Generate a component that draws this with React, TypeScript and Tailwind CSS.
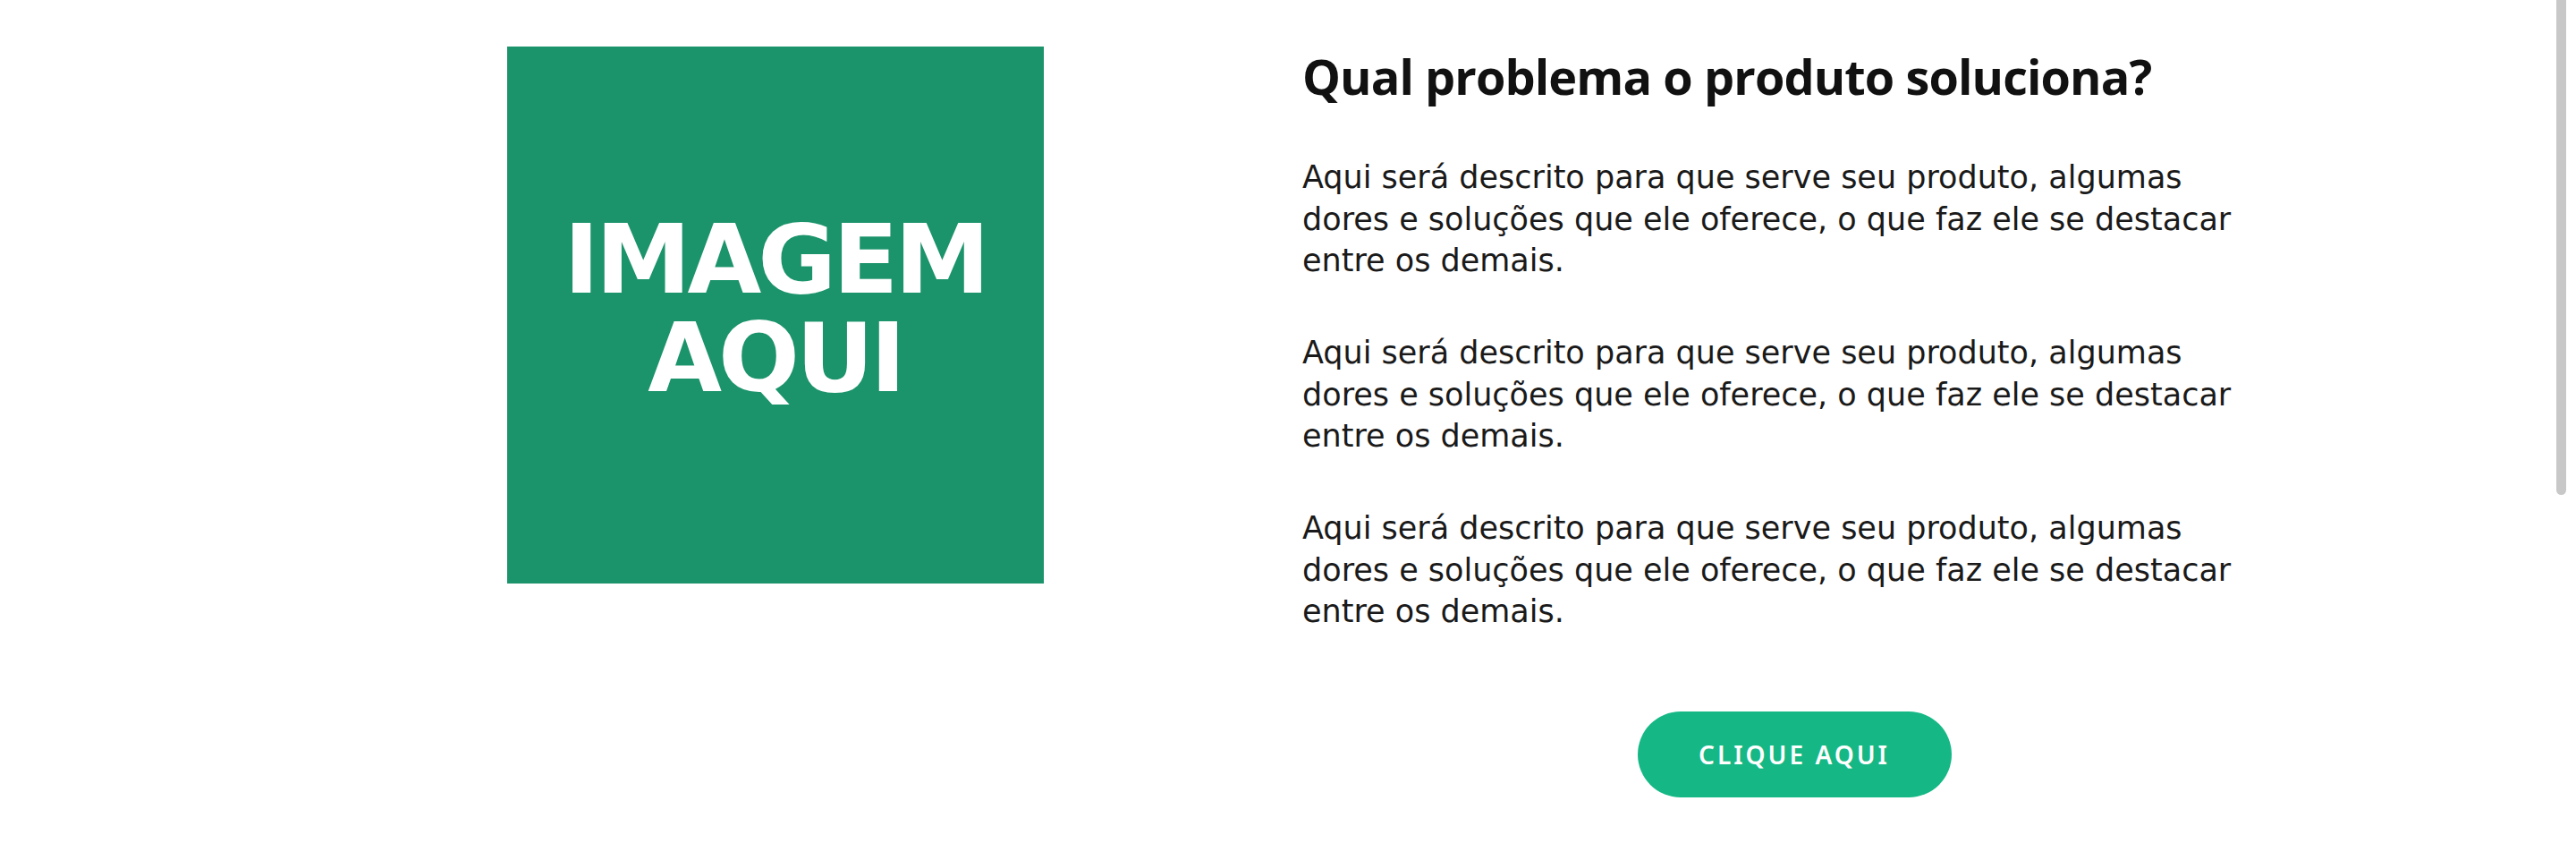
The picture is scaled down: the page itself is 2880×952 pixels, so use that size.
export default function App() {
  const paragraphs = [0, 1, 2]

  return (
    <div className="bg-white flex justify-center pr-[8px]">
      <section className="w-[2278px] flex items-start">
        <div className="w-1/2 flex justify-center pt-[52px]">
          <div className="w-[600px] h-[600px] bg-[#1b936b] flex flex-col items-center justify-center pb-[14px] text-white text-[107px] leading-[110px] font-bold tracking-[-4px] font-['DejaVu_Sans',sans-serif]">
            <span>IMAGEM</span>
            <span>AQUI</span>
          </div>
        </div>

        <div className="w-1/2 pl-[20px] pr-[19px] pt-[53px] pb-[60px] flex flex-col">
          <h2 className="font-['Open_Sans',sans-serif] font-bold text-[54px] leading-[1.2] tracking-[-0.9px] text-[#111111] mb-[57px]">
            Qual problema o produto soluciona?
          </h2>

          {paragraphs.map((i) => (
            <p
              key={i}
              className="font-['DejaVu_Sans',sans-serif] text-[35px] leading-[46.7px] text-[#1a1a1a] mb-[56px]"
            >
              Aqui será descrito para que serve seu produto, algumas
              <br />
              dores e soluções que ele oferece, o que faz ele se destacar
              <br />
              entre os demais.
            </p>
          ))}

          <div className="flex justify-center mt-[32px]">
            <button className="w-[351px] h-[96px] rounded-full bg-[#15b885] text-white text-[28px] font-semibold tracking-[3px] font-['Noto_Sans',sans-serif]">
              CLIQUE AQUI
            </button>
          </div>
        </div>
      </section>

      {/* scrollbar thumb as seen in the screenshot */}
      <div className="fixed top-0 right-[11px] w-[11px] h-[553px] bg-[#c8c8c8] rounded-b-[6px]" />
    </div>
  )
}
